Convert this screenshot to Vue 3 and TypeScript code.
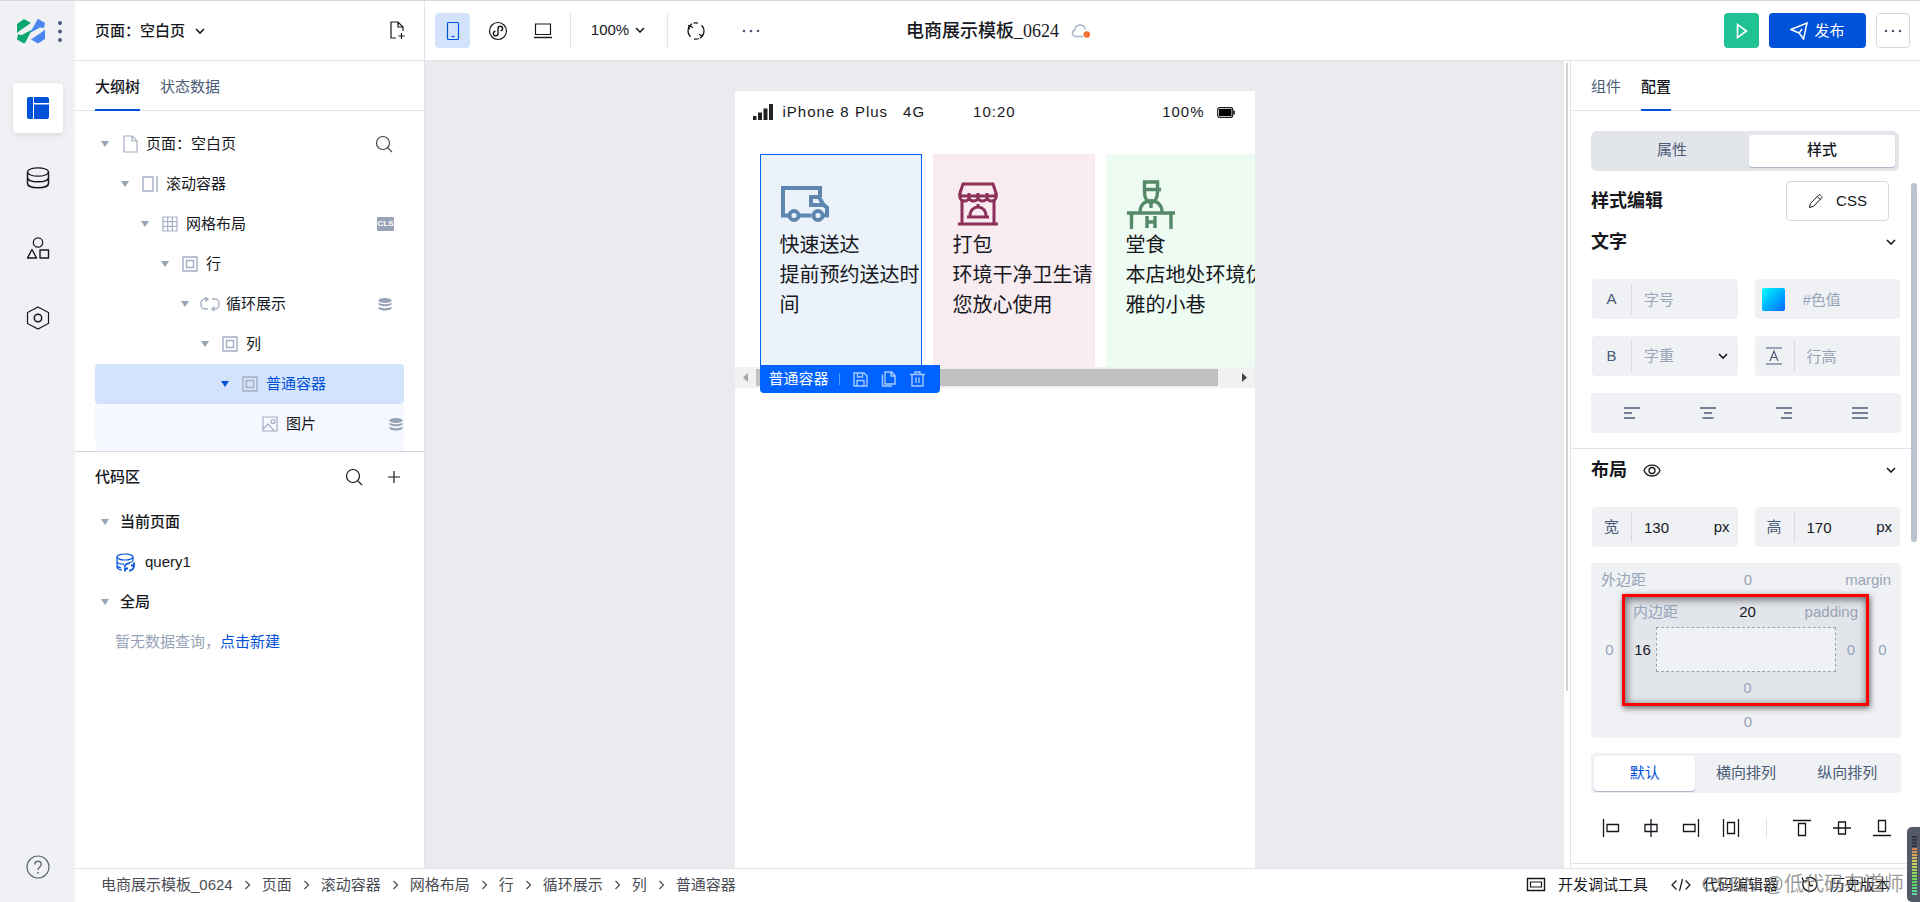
<script setup lang="ts">
import { h, ref } from 'vue'

type Glyph = [number, number, string]

const glyphs: Record<string, Glyph> = {
  chevron: [10, 6, '<path d="M1 1l4 4 4-4" stroke-width="1.6"/>'],
  crumb: [7, 10, '<path d="M1.500 1l4 4-4 4" stroke-width="1.2"/>'],
  caret: [8, 6, '<path d="M0 0h8L4 6z" fill="currentColor" stroke="none"/>'],
  newPage: [18, 20, '<path d="M7 17H2V1h7l5 5v4M9 1v5h5M12.500 12v6M9.500 15h6"/>'],
  search: [18, 18, '<circle cx="8" cy="8" r="6.500"/><path d="M12.800 12.800L17 17"/>'],
  plus: [14, 14, '<path d="M7 1v12M1 7h12"/>'],
  page: [16, 18, '<path d="M2 1h8l5 5v11H2zM10 1v5h5"/>'],
  scroll: [16, 16, '<path d="M1 1h10v14H1zM15 0v16" stroke-width="1.400"/>'],
  grid: [16, 16, '<path d="M1 1h14v14H1zM1 5.700h14M1 10.300h14M5.700 1v14M10.300 1v14"/>'],
  box: [16, 16, '<path d="M1 1h14v14H1zM4.500 4.500h7v7h-7z" stroke-width="1.400"/>'],
  loop: [20, 14, '<path d="M7 2H5a4 4 0 00-4 4v2a4 4 0 004 4h3M5.500 0L8 2.200 5.500 4.500M12 2h3a4 4 0 014 4v2a4 4 0 01-4 4h-3M14.500 9.500L12 12l2.500 2.300" stroke-width="1.400"/>'],
  image: [16, 16, '<path d="M1 1h14v14H1zM1.500 12.500L6 8l6.500 7"/><circle cx="11" cy="5.500" r="2"/>'],
  stack: [14, 13, '<g fill="currentColor" stroke="none"><ellipse cx="7" cy="2.500" rx="6.500" ry="2.500"/><path d="M.5 4.500c2 2.200 11 2.200 13 0v2c-2 2.400-11 2.400-13 0zM.5 8.500c2 2.200 11 2.200 13 0v2c-2 2.800-11 2.800-13 0z"/></g>'],
  query: [19, 19, '<ellipse cx="9" cy="4" rx="8" ry="3"/><path d="M1 4v10c0 1.500 2 2.500 5 3M17 4v4M1 9c1 1.700 4 2.300 7 2.200M1 13c1 1 2 1.600 4 1.800M17 8c-.5.7-2 1.400-4 1.700"/><path d="M8.500 14a4.500 4.500 0 015-3.500M18 13a4.500 4.500 0 01-5 4.500M9 18.500v-3h3M18 9.500v3h-3" stroke-width="1.800"/>'],
  layout: [22, 22, '<g fill="currentColor" stroke="none"><path d="M2 0h4v22H2a2 2 0 01-2-2V2a2 2 0 012-2zM7 0h13a2 2 0 012 2v4H7zM7 7.500h15V20a2 2 0 01-2 2H7z"/></g>'],
  database: [24, 22, '<ellipse cx="12" cy="5" rx="10.500" ry="4.200"/><path d="M1.500 5v11.500c0 5.600 21 5.600 21 0V5M1.500 10.800c0 5.400 21 5.400 21 0" stroke-width="1.500"/>'],
  shapes: [24, 22, '<circle cx="12" cy="5.500" r="4.700"/><path d="M6 12.500L10.500 21h-9zM14 13h8.500v8H14z" stroke-width="1.400" stroke-linejoin="round"/>'],
  hex: [24, 24, '<path d="M12 1l10.500 5.500v11L12 23 1.500 17.500v-11z"/><circle cx="12" cy="12" r="3.700" stroke-width="1.500"/>'],
  help: [24, 24, '<circle cx="12" cy="12" r="11"/><path d="M8.800 9.500c0-4.300 6.400-4.300 6.400 0 0 2.500-3.200 2.500-3.200 5.500M12 17v1.800" stroke-width="1.400"/>'],
  mobile: [14, 20, '<rect x="1.500" y="1.500" width="11" height="17" rx="1"/><path d="M5.500 15.500h3" stroke-width="1.400"/>'],
  mini: [20, 20, '<circle cx="10" cy="10" r="8.500"/><path d="M7.500 10.200a2.300 2.300 0 102.500 2.300v-5a2.300 2.300 0 112.500 2.300" stroke-width="1.400"/>'],
  laptop: [20, 16, '<path d="M2.500 1h15v10.500h-15z"/><path d="M1 14.500h18" stroke-width="1.400"/>'],
  refresh: [20, 20, '<path d="M6 2.800a8.300 8.300 0 00-1.500 13M8 17.800a8.300 8.300 0 005-.3M14 17.200a8.300 8.300 0 001.500-13M12 2.200a8.300 8.300 0 00-4.500 0M2.500 4l1 4.300M2.500 7.500L4.500 5l2.300 1.800M17.500 12.500l-2 2.700-2.300-2"/>'],
  dots: [18, 4, '<g fill="currentColor" stroke="none"><circle cx="2" cy="2" r="1.300"/><circle cx="9" cy="2" r="1.300"/><circle cx="16" cy="2" r="1.300"/></g>'],
  cloud: [20, 14, '<path d="M12 12.500H4.500a3.300 3.300 0 01-.6-6.500C4.200-.5 13.500-.8 14.300 5.500" stroke="#a9b3c9" stroke-width="1.400"/><circle cx="15.800" cy="10.500" r="3.300" fill="#f07038" stroke="none"/>'],
  play: [12, 16, '<path d="M1.500 1.500v13L10.500 8z" stroke-width="1.600"/>'],
  plane: [18, 18, '<path d="M1 7.500L17 1l-3.500 16-4.300-6zM9.200 11L12 7M9.200 11L1 7.500" stroke-width="1.500"/>'],
  pencil: [16, 16, '<path d="M1.500 14.500l1-4.200L11 1.800c.8-.8 3.500 2 2.800 2.900l-8.200 8.600zM9.300 3.500l3 3" stroke-width="1"/>'],
  eye: [18, 13, '<path d="M1 6.500C4-.8 14-.8 17 6.500 14 13.800 4 13.800 1 6.500z" stroke-width="1.300"/><circle cx="9" cy="6.500" r="3" stroke-width="1.300"/>'],
  lineHeight: [16, 18, '<path d="M0 1h16M0 17h16M4 14L8 4l4 10M5.300 10.500h5.400" stroke-width="1.200"/>'],
  alignL: [16, 12, '<path d="M0 1h16M0 6h8M0 11h11" stroke-width="1.300"/>'],
  alignC: [16, 12, '<path d="M0 1h16M4 6h8M2.500 11h11" stroke-width="1.300"/>'],
  alignR: [16, 12, '<path d="M0 1h16M8 6h8M5 11h11" stroke-width="1.300"/>'],
  alignJ: [16, 12, '<path d="M0 1h16M0 6h16M0 11h16" stroke-width="1.300"/>'],
  hStart: [18, 18, '<path d="M1.500 0v18M5 5.500h11.500v7H5z" stroke-width="1.300"/>'],
  hMid: [18, 18, '<path d="M9 0v18M3 5.500h12v7H3z" stroke-width="1.300"/>'],
  hEnd: [18, 18, '<path d="M16.500 0v18M1.500 5.500H13v7H1.500z" stroke-width="1.300"/>'],
  hSpread: [18, 18, '<path d="M1.500 0v18M16.500 0v18M5.500 3.500h7v11h-7z" stroke-width="1.300"/>'],
  vStart: [18, 18, '<path d="M0 1.500h18M5.500 4.500h7v12h-7z" stroke-width="1.300"/>'],
  vMid: [18, 18, '<path d="M0 9h18M5.500 3h7v12h-7z" stroke-width="1.300"/>'],
  vEnd: [18, 18, '<path d="M0 16.500h18M5.500 1.500h7v11h-7z" stroke-width="1.300"/>'],
  devtools: [20, 15, '<path d="M1.500 1.500h17v12h-17z" stroke-width="1.400"/><path d="M4.500 5h11v5h-11z"/>'],
  code: [20, 14, '<path d="M5.500 2.500L1 7l4.500 4.500M14.500 2.500L19 7l-4.500 4.500M11.500 1l-3 12" stroke-width="1.200"/>'],
  history: [17, 17, '<path d="M3 4.500a7 7 0 102-2M1 1.500l1.700 4L6.500 4M8.500 5v4.500h3.500" stroke-width="1.300"/>'],
  save: [15, 15, '<path d="M1 1h10l3 3v10H1zM4.500 1v4h5V1M4 14V8.500h7V14" stroke-width="1.400"/>'],
  copy: [15, 16, '<path d="M4 1h6.500L14 4.500V13H4zM10 1v4h4M1.500 3.500V15H11" stroke-width="1.400"/>'],
  trash: [15, 16, '<path d="M0 3.500h15M5 3V1h5v2M2 4v11h11V4M6 6.500v5.500M9 6.500v5.500" stroke-width="1.400"/>'],
  signal: [20, 16, '<g fill="#222" stroke="none"><path d="M0 12h3.500v4H0zM5 8.500h4V16H5zM10.500 4.500h4V16h-4zM16 0h4v16h-4z"/></g>'],
  battery: [18, 11, '<rect x=".7" y=".7" width="15" height="9.600" rx="2"/><path d="M2 2h12.500v7H2z" fill="#000" stroke="none"/><path d="M17 3.500v4" stroke-width="1.600"/>'],
  truck: [50, 50, '<path d="M9 36.500H3V9h37v9M40 18h-9v8h14.500M39 18l4.500 8 3.500 2.500v8h-4M18.500 36.500h13" stroke-width="4"/><circle cx="14" cy="36.500" r="4.500" stroke-width="4"/><circle cx="38" cy="36.500" r="4.500" stroke-width="4"/>'],
  shop: [50, 50, '<path d="M10 5h30l3 9v3H7v-3zM9 21v24M41 21v24M5 45h40" stroke-width="3"/><path d="M7 14v4a4.500 4 0 009 0 4.500 4 0 009 0 4.500 4 0 009 0 4.500 4 0 009 0v-4M16 14v4M25 14v4M34 14v4" stroke-width="3"/><path d="M17 37c0-12 16-12 16 0M14 38h22M25 25v4" stroke-width="3"/>'],
  chef: [50, 50, '<path d="M18.500 13V3h13v10M17 10.500h18M18.500 13c0 14 13 14 13 0M14 33c0-15 22-15 22 0M25 23v6M1 34h48M5.500 35v15M45 35v15M21 37v12M29 37v12M21 43h8" stroke-width="3.400"/>'],
}

const Icon = (p: { name: string }) => {
  const [w, ht, body] = glyphs[p.name]
  return h('svg', {
    width: w, height: ht, viewBox: `0 0 ${w} ${ht}`, fill: 'none',
    stroke: 'currentColor', 'stroke-width': 1.2, 'aria-hidden': 'true', innerHTML: body,
  })
}
Icon.props = ['name']

interface Node { text: string; icon: string; badge?: 'cls' | 'stack' | 'search'; state?: string }
const tree: Node[] = [
  { text: '页面：空白页', icon: 'page', badge: 'search' },
  { text: '滚动容器', icon: 'scroll' },
  { text: '网格布局', icon: 'grid', badge: 'cls' },
  { text: '行', icon: 'box' },
  { text: '循环展示', icon: 'loop', badge: 'stack' },
  { text: '列', icon: 'box' },
  { text: '普通容器', icon: 'box', state: 'selected' },
  { text: '图片', icon: 'image', badge: 'stack', state: 'leaf' },
]
const cards = [
  { icon: 'truck', kind: 'blue', title: '快速送达', text: '提前预约送达时间' },
  { icon: 'shop', kind: 'pink', title: '打包', text: '环境干净卫生请您放心使用' },
  { icon: 'chef', kind: 'green', title: '堂食', text: '本店地处环境优雅的小巷' },
]
const crumbs = ['电商展示模板_0624', '页面', '滚动容器', '网格布局', '行', '循环展示', '列', '普通容器']
const rail = [
  { icon: 'layout', label: '页面设计' }, { icon: 'database', label: '数据源' },
  { icon: 'shapes', label: '组件库' }, { icon: 'hex', label: '设置' },
]
const textAligns = ['alignL', 'alignC', 'alignR', 'alignJ']
const hAligns = ['hStart', 'hMid', 'hEnd', 'hSpread']
const vAligns = ['vStart', 'vMid', 'vEnd']
const meter = Array.from({ length: 20 }, (_, i) => (i < 4 ? '#33363f' : `hsl(${20 + (i - 4) * 9} 60% 60%)`))
const width = ref('130')
const height = ref('170')
</script>

<template>
  <div class="app">
    <nav class="rail">
      <div class="brand">
        <svg class="logo" width="28" height="25" viewBox="0 0 28 25" aria-hidden="true">
          <path fill="#0aa66e" d="M0 5L7 0l7 4L3 11.500 0 14zM1 15.500l4 .5 10-5.500L8 24l-1 .5-7-4z" />
          <path fill="#4a86f0" d="M28 20l-7 4.500-7-4 11-7.500 3-2.500zM27 9l-4-.5L13 14 20.500.5l1-.5L28 4z" />
        </svg>
        <svg width="4" height="21" viewBox="0 0 4 21" fill="#4b5b76" aria-hidden="true"><circle cx="2" cy="2" r="2" /><circle cx="2" cy="10.500" r="2" /><circle cx="2" cy="19" r="2" /></svg>
      </div>
      <button v-for="(r, i) in rail" :key="r.icon" class="rail-btn" :class="{ active: i === 0 }" :aria-label="r.label"><Icon :name="r.icon" /></button>
      <button class="rail-btn help" aria-label="帮助"><Icon name="help" /></button>
    </nav>

    <div class="main">
      <header class="topbar">
        <div class="page-pick">
          <button class="plain strong">页面：空白页 <Icon name="chevron" /></button>
          <button class="plain" aria-label="新建页面"><Icon name="newPage" /></button>
        </div>
        <div class="devices">
          <button class="tool on" aria-label="手机"><Icon name="mobile" /></button>
          <button class="tool" aria-label="小程序"><Icon name="mini" /></button>
          <button class="tool" aria-label="电脑"><Icon name="laptop" /></button>
          <button class="plain zoom">100% <Icon name="chevron" /></button>
          <button class="tool" aria-label="刷新"><Icon name="refresh" /></button>
          <button class="tool more-tool" aria-label="更多工具"><Icon name="dots" /></button>
        </div>
        <h1 class="title">电商展示模板_0624 <Icon name="cloud" /></h1>
        <div class="actions">
          <button class="run" aria-label="预览"><Icon name="play" /></button>
          <button class="publish"><Icon name="plane" />发布</button>
          <button class="more" aria-label="更多"><Icon name="dots" /></button>
        </div>
      </header>

      <div class="body">
        <aside class="left">
          <div class="tabs">
            <button class="tab on">大纲树</button>
            <button class="tab">状态数据</button>
          </div>
          <ul class="tree">
            <li v-for="(n, i) in tree" :key="i" class="node" :class="n.state" :style="{ paddingLeft: 6 + i * 20 + 'px' }">
              <Icon class="caret" name="caret" />
              <span class="node-icon"><Icon :name="n.icon" /></span>
              <span>{{ n.text }}</span>
              <span v-if="n.badge === 'cls'" class="badge cls">CLS</span>
              <Icon v-else-if="n.badge" class="badge" :class="n.badge" :name="n.badge" />
            </li>
            <li class="node leaf" />
          </ul>
          <section class="code">
            <div class="code-head">
              <h2>代码区</h2>
              <button class="plain" aria-label="搜索"><Icon name="search" /></button>
              <button class="plain" aria-label="添加"><Icon name="plus" /></button>
            </div>
            <div class="code-row group"><Icon class="caret" name="caret" />当前页面</div>
            <div class="code-row item"><Icon name="query" />query1</div>
            <div class="code-row group"><Icon class="caret" name="caret" />全局</div>
            <div class="code-row empty">暂无数据查询，<a href="#new">点击新建</a></div>
          </section>
        </aside>

        <main class="canvas">
          <div class="phone">
            <div class="status">
              <Icon name="signal" /><span class="carrier">iPhone 8 Plus</span><span>4G</span>
              <span class="clock">10:20</span><span class="power">100%</span><Icon name="battery" />
            </div>
            <div class="strip">
              <article v-for="c in cards" :key="c.icon" class="card" :class="c.kind">
                <Icon :name="c.icon" />
                <p>{{ c.title }}</p>
                <p>{{ c.text }}</p>
              </article>
            </div>
            <div class="hscroll">
              <svg width="5" height="9" viewBox="0 0 5 9" aria-hidden="true"><path d="M5 0v9L0 4.500z" fill="#a3a3a3" /></svg>
              <div class="thumb" />
              <svg width="5" height="9" viewBox="0 0 5 9" aria-hidden="true"><path d="M0 0v9l5-4.500z" fill="#444" /></svg>
              <div class="float-bar">
                <span>普通容器</span><i />
                <button aria-label="保存"><Icon name="save" /></button>
                <button aria-label="复制"><Icon name="copy" /></button>
                <button aria-label="删除"><Icon name="trash" /></button>
              </div>
            </div>
          </div>
        </main>
        <div class="gutter"><div class="gutter-bar" /></div>

        <aside class="right">
          <div class="tabs">
            <button class="tab">组件</button>
            <button class="tab on">配置</button>
          </div>
          <div class="right-scroll">
            <div class="mode"><button>属性</button><button class="on">样式</button></div>
            <div class="style-head">
              <h2>样式编辑</h2>
              <button class="css"><Icon name="pencil" />CSS</button>
            </div>
            <div class="sec-head"><h2>文字</h2><Icon name="chevron" /></div>
            <div class="fields">
              <label class="field"><span class="pre">A</span><input placeholder="字号" aria-label="字号"></label>
              <label class="field color"><span class="swatch" /><input placeholder="#色值" aria-label="色值"></label>
              <label class="field"><span class="pre">B</span><select aria-label="字重"><option>字重</option></select><Icon class="arrow" name="chevron" /></label>
              <label class="field"><span class="pre"><Icon name="lineHeight" /></span><input placeholder="行高" aria-label="行高"></label>
            </div>
            <div class="aligns"><button v-for="a in textAligns" :key="a" :aria-label="a"><Icon :name="a" /></button></div>
            <div class="rule" />
            <div class="sec-head"><h2>布局</h2><Icon class="eye" name="eye" /><Icon name="chevron" /></div>
            <div class="fields size">
              <label class="field"><span class="pre">宽</span><input v-model="width"><span class="unit">px</span></label>
              <label class="field"><span class="pre">高</span><input v-model="height"><span class="unit">px</span></label>
            </div>
            <div class="margin-box">
              <div class="box-top"><span>外边距</span><input value="0" aria-label="上外边距"><span class="end">margin</span></div>
              <div class="box-mid">
                <input value="0" aria-label="左外边距">
                <div class="padding-box">
                  <div class="box-top"><span>内边距</span><input class="set" value="20" aria-label="上内边距"><span class="end">padding</span></div>
                  <div class="box-mid inner">
                    <input class="set" value="16" aria-label="左内边距">
                    <div class="content-box" />
                    <input value="0" aria-label="右内边距">
                  </div>
                  <input class="bottom" value="0" aria-label="下内边距">
                </div>
                <input value="0" aria-label="右外边距">
              </div>
              <input class="bottom" value="0" aria-label="下外边距">
            </div>
            <div class="flow"><button class="on">默认</button><button>横向排列</button><button>纵向排列</button></div>
            <div class="place">
              <button v-for="a in hAligns" :key="a" :aria-label="a"><Icon :name="a" /></button>
              <i />
              <button v-for="a in vAligns" :key="a" :aria-label="a"><Icon :name="a" /></button>
            </div>
            <div class="rule last" />
          </div>
          <div class="vbar" />
        </aside>
      </div>

      <footer class="footer">
        <nav class="crumbs">
          <template v-for="(c, i) in crumbs" :key="c"><Icon v-if="i" name="crumb" /><a href="#node">{{ c }}</a></template>
        </nav>
        <div class="foot-tools">
          <button class="plain"><Icon name="devtools" />开发调试工具</button>
          <button class="plain"><Icon name="code" />代码编辑器</button>
          <button class="plain"><Icon name="history" />历史版本</button>
        </div>
      </footer>
    </div>
    <div class="watermark">CSDN @低代码布道师</div>
    <div class="meter"><i v-for="(m, i) in meter" :key="i" :style="{ background: m }" /></div>
  </div>
</template>

<style>
html, body { margin: 0; overflow: hidden; }
</style>

<style scoped>
* { box-sizing: border-box; }
.app { position: relative; display: flex; height: 100vh; overflow: hidden; border-top: 1px solid #d9d9dc; font: 15px/20px "Liberation Sans", "Noto Sans CJK SC", sans-serif; color: #16181d; background: #fff; }
button, input, select { font: inherit; color: inherit; border: 0; background: none; padding: 0; margin: 0; outline: 0; min-width: 0; }
button { display: inline-flex; align-items: center; justify-content: center; white-space: nowrap; }
h1, h2, p, ul { margin: 0; padding: 0; list-style: none; }
svg { flex: none; display: block; }
a { color: inherit; text-decoration: none; }

.rail { flex: none; width: 75px; display: flex; flex-direction: column; align-items: center; gap: 20px; background: #eff1f5; padding-bottom: 10px; }
.brand { display: flex; align-items: center; align-self: flex-start; gap: 13px; height: 60px; padding-left: 17px; margin-bottom: 2px; }
.rail-btn { width: 50px; height: 50px; border-radius: 4px; }
.rail-btn.active { background: #fff; color: #0052d9; box-shadow: 0 2px 6px #0000001a; }
.rail-btn.help { margin-top: auto; color: #666a73; }

.main { flex: 1; min-width: 0; display: flex; flex-direction: column; }
.topbar { position: relative; flex: none; display: flex; height: 60px; border-bottom: 1px solid #e1e4e9; }
.plain { gap: 10px; }
.page-pick { width: 350px; display: flex; justify-content: space-between; align-items: center; padding: 0 17px 0 20px; border-right: 1px solid #e1e4e9; }
.strong { font-weight: 500; }
.devices { display: flex; align-items: center; gap: 10px; padding-left: 10px; }
.tool { width: 35px; height: 35px; border-radius: 4px; }
.tool.on { background: #d4e3fc; color: #0052d9; }
.zoom { width: 98px; height: 35px; gap: 6px; padding: 0 2px 2px 0; border: solid #e1e4e9; border-width: 0 1px; }
.more-tool { margin-left: 10px; color: #4b5b76; }
.title { position: absolute; left: 831px; top: 17px; display: flex; align-items: center; gap: 12px; font: 500 18px/26px "Liberation Serif", "Noto Sans CJK SC", serif; }
.actions { margin-left: auto; display: flex; align-items: center; gap: 10px; padding-right: 10px; }
.actions button { height: 35px; border-radius: 4px; }
.actions .run { width: 35px; background: #20c294; color: #fff; }
.actions .publish { width: 97px; gap: 6px; background: #0052d9; color: #fff; }
.actions .more { width: 34px; border: 1px solid #d5d9e3; color: #4b5b76; }

.body { flex: 1; min-height: 0; display: flex; }
.left { flex: none; width: 350px; display: flex; flex-direction: column; border-right: 1px solid #e1e4e9; }
.tabs { flex: none; display: flex; gap: 20px; height: 50px; padding-left: 20px; border-bottom: 1px solid #e1e4e9; }
.tab { height: 50px; color: #4b5b76; border-bottom: 2px solid transparent; padding-top: 4px; }
.tab.on { color: #16181d; border-color: #0052d9; font-weight: 500; }
.tree { flex: none; height: 340px; padding: 13px 20px 0; overflow: hidden; }
.node { display: flex; align-items: center; height: 40px; border-radius: 4px; padding-right: 10px; }
.node.selected { background: #d4e3fc; color: #0052d9; }
.node.selected .caret { color: #0052d9; }
.node.leaf { background: #f5f8ff; padding-right: 1px; }
.node.leaf .caret { visibility: hidden; }
.caret { color: #97a3b7; }
.node-icon { display: flex; justify-content: center; width: 20px; margin: 0 6px 0 11px; color: #a4afc3; }
.badge { margin-left: auto; color: #97a3b7; }
.badge.stack { margin-right: 2px; }
.badge.search { margin-right: 1px; color: #444; }
.leaf .badge.stack { margin-right: 0; }
.badge.cls { width: 17px; height: 14px; border-radius: 1px; background: #97a3b7; color: #fff; font: 700 8px/14px "Liberation Sans", sans-serif; text-align: center; }
.code { flex: 1; border-top: 1px solid #d3d7e0; padding: 0 20px; }
.code h2 { margin-right: auto; font-size: 15px; font-weight: 500; }
.code-head { display: flex; align-items: center; gap: 24px; height: 50px; padding-right: 3px; }
.code-row { display: flex; align-items: center; height: 40px; }
.group { gap: 11px; padding-left: 6px; font-weight: 500; }
.item { gap: 10px; padding-left: 21px; }
.item svg { color: #0052d9; }
.empty { padding-left: 20px; color: #97a3b7; }
.empty a { color: #0052d9; }

.canvas { flex: 1; min-width: 0; display: flex; justify-content: center; padding-top: 30px; background: #eaebef; }
.phone { width: 520px; background: #fff; overflow: hidden; }
.status { display: flex; align-items: center; height: 42px; padding: 0 20px 0 18px; letter-spacing: 1px; }
.carrier { margin: 0 15px 0 10px; }
.clock { margin-left: 48px; }
.power { margin: 0 12px 0 auto; }
.strip { display: flex; gap: 11px; margin: 21px 0 0 25px; overflow: hidden; }
.card { flex: none; width: 162px; height: 213px; padding: 25px 0 0 20px; font-size: 20px; line-height: 30px; }
.card svg { margin-bottom: 1px; }
.card.blue { background: #ecf2fa; border: 1px solid #0063ff; padding: 24px 0 0 19px; }
.card.pink { background: #f9ecf1; }
.card.green { background: #edfbf2; }
.blue svg { color: #5d87b0; }
.pink svg { color: #8c2f59; }
.green svg { color: #558a68; }
.hscroll { position: relative; display: flex; align-items: center; height: 21px; padding: 0 8px; background: #f1f1f1; }
.thumb { flex: 1; height: 17px; margin: 0 24px 0 8px; background: #c1c1c1; }
.float-bar { position: absolute; left: 25px; top: -2px; display: flex; align-items: center; width: 180px; height: 28px; padding-left: 9px; border-radius: 0 0 4px 4px; background: #0063ff; color: #fff; white-space: nowrap; }
.float-bar i { width: 1px; height: 12px; margin: 0 14px 0 10px; background: #5c9bff; }
.float-bar button { margin-right: 15px; color: #a6c8ff; }
.gutter { flex: none; width: 6px; background: #fff; padding: 2px 2px 0; }
.gutter-bar { width: 2px; height: 78%; background: #d3d3d3; }

.right { position: relative; flex: none; width: 350px; border-left: 1px solid #e1e4e9; }
.right-scroll { padding: 20px 19px 0 20px; }
.right h2 { font-size: 18px; line-height: 24px; font-weight: 700; }
.mode { display: grid; grid-template-columns: 154fr 146fr; height: 40px; margin-right: 2px; padding: 4px; border-radius: 6px; background: #e2e5ea; color: #4b5b76; }
.mode button { height: 32px; padding-bottom: 2px; border-radius: 3px; }
.mode .on, .flow .on { background: #fff; box-shadow: 0 1px 1px #a9b3c4; }
.mode .on { color: #16181d; font-weight: 500; }
.style-head { display: flex; justify-content: space-between; align-items: center; height: 40px; margin: 10px 12px 0 0; }
.css { width: 103px; height: 40px; gap: 12px; border: 1px solid #d5d9e3; border-radius: 4px; }
.sec-head { display: flex; align-items: center; height: 24px; margin-top: 9px; padding-right: 5px; }
.sec-head > svg:last-child { margin-left: auto; }
.eye { margin-left: 16px; }
.fields { display: grid; grid-template-columns: 1fr 1fr; gap: 17px; margin: 25px 1px 0; }
.field { position: relative; display: flex; align-items: center; height: 40px; border-radius: 4px; background: #eff1f5; }
.field input { flex: 1; width: 0; height: 40px; padding-left: 12px; }
.field input::placeholder { color: #97a3b7; opacity: 1; }
.field select { flex: 1; width: 0; height: 40px; padding-left: 12px; appearance: none; color: #97a3b7; }
.arrow { margin-right: 10px; }
.pre { display: flex; justify-content: center; align-items: center; width: 40px; height: 30px; border-right: 1px solid #d5d9e0; color: #4b5b76; }
.swatch { width: 23px; height: 23px; margin: 0 6px 0 7px; border-radius: 2px; background: linear-gradient(135deg, #00fffb, #0068ff); }
.unit { margin-right: 8px; }
.aligns { display: flex; justify-content: space-between; align-items: center; height: 40px; margin-top: 17px; padding: 0 33px; border-radius: 4px; background: #eff1f5; color: #4b5b76; }
.rule { height: 1px; margin: 15px -11px 0 -20px; background: #e1e4e9; }
.margin-box { height: 175px; margin-top: 16px; border-radius: 4px; background: #eff1f5; color: #97a3b7; }
.margin-box input { width: 32px; height: 20px; padding-left: 4px; text-align: center; }
.box-top { display: grid; grid-template-columns: 1fr 32px 1fr; height: 31px; padding: 7px 10px 0; }
.end { text-align: right; }
.box-mid { display: flex; align-items: center; justify-content: space-between; }
.box-mid > input { width: 33px; }
.box-mid > input:last-child { padding: 0 4px 0 0; }
.padding-box { flex: 1; height: 112px; border: 3px solid #f00; background: #e2e5ea; margin: 0 -1px 0 -2px; box-shadow: 1px 2px 6px #0009, inset 1px 2px 8px #0009; }
.padding-box .box-top { height: 30px; padding: 5px 8px 0; }
.inner > input { width: 31px; }
.inner > input:last-child { width: 30px; padding: 0; }
.content-box { flex: 1; height: 45px; border: 1px dashed #97a3b7; background: #eff1f5; }
.margin-box .set { color: #16181d; }
.margin-box .bottom { display: block; margin: 6px auto 0; }
.flow { display: flex; height: 40px; margin-top: 15px; padding: 3px; border-radius: 4px; background: #eff1f5; color: #4b5b76; }
.flow button { flex: 1; height: 35px; padding-bottom: 2px; border-radius: 4px; }
.flow .on { color: #0052d9; }
.place { display: flex; align-items: center; gap: 22px; height: 70px; padding: 0 10px 0 11px; }
.place i { width: 1px; height: 20px; margin: 0 auto; background: #e1e4e9; }
.rule.last { margin-top: 0; }
.vbar { position: absolute; right: 3px; top: 122px; width: 6px; height: 359px; border-radius: 3px; background: #bcc3d0; }

.footer { flex: none; display: flex; justify-content: space-between; align-items: center; height: 34px; padding-bottom: 2px; border-top: 1px solid #e1e4e9; }
.crumbs { display: flex; align-items: center; gap: 11px; padding-left: 26px; color: #4a4d55; }
.foot-tools { display: flex; gap: 23px; padding-right: 30px; }
.foot-tools .plain { gap: 12px; }
.watermark { position: absolute; right: 16px; bottom: 4px; font-size: 20px; line-height: 28px; color: #6e6e6eb3; pointer-events: none; }
.meter { position: absolute; right: 0; bottom: 0; width: 13px; height: 75px; padding: 9px 3px 0 5px; display: flex; flex-direction: column; gap: 1px; border-radius: 5px 0 0 5px; background: #545968; }
.meter i { height: 2px; flex: none; }
</style>
